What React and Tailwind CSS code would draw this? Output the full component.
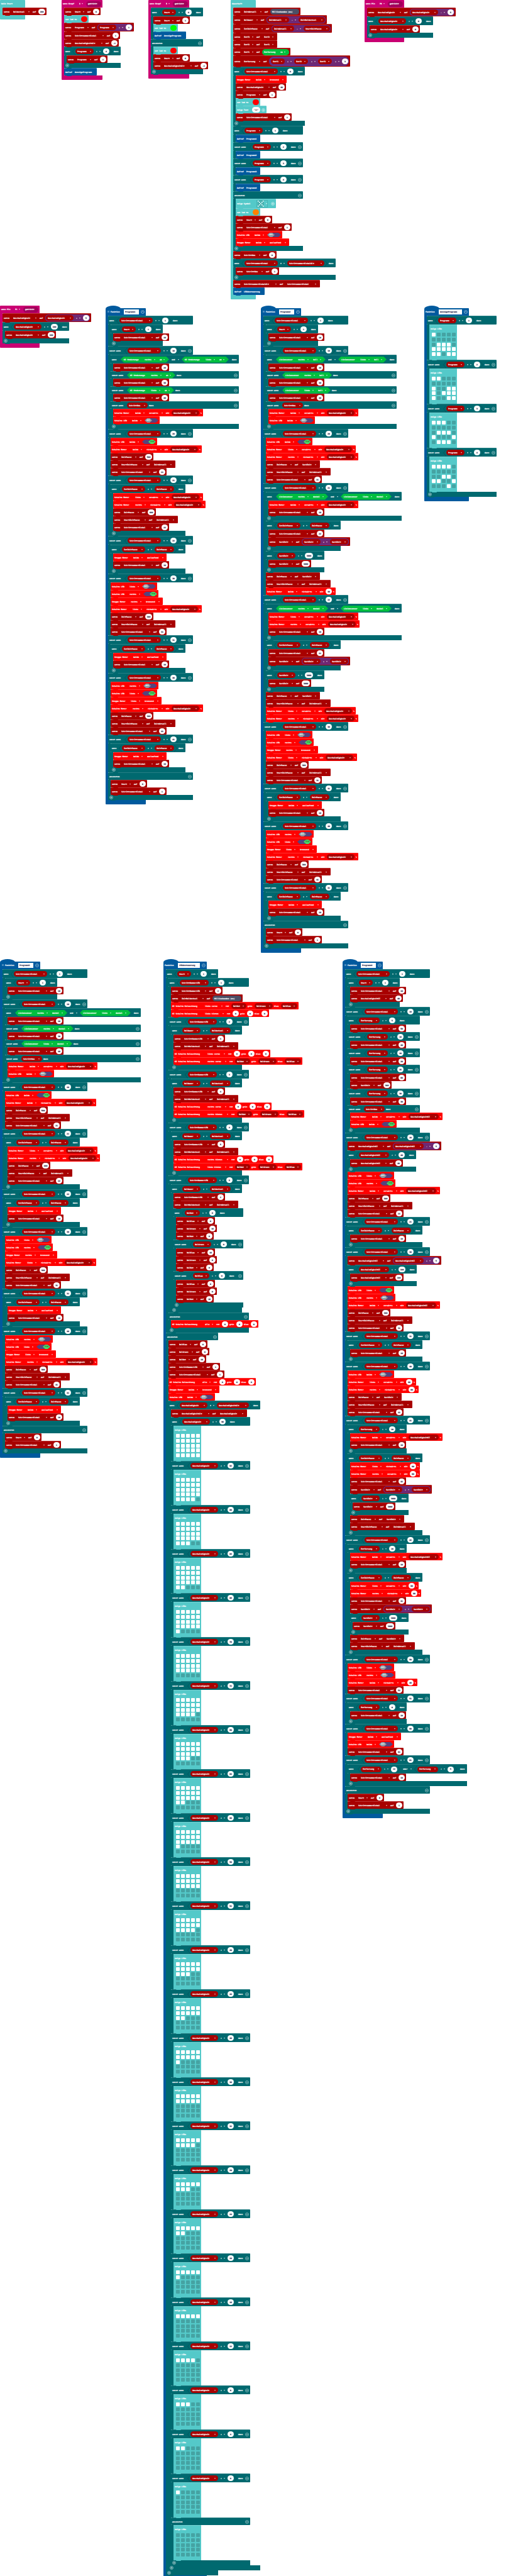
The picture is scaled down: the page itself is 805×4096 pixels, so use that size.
import React from "react";

const advance = (t) => Math.round(String(t).length * 2.2);

const Txt = ({ children }) => (
  <span className="block shrink-0" style={{ width: advance(children) }}>{children}</span>
);

const Arrow = () => (
  <svg viewBox="0 0 4 4" className="h-[2px] w-[2px] shrink-0" aria-hidden="true">
    <path d="M0 0.5h4L2 3.5z" fill="currentColor" />
  </svg>
);

function Drop({ value, className = "" }) {
  return (
    <span className={"flex shrink-0 items-center gap-[2px] pl-[2px] pr-[3px] " + className}>
      <select aria-label={value} className="h-[6px] appearance-none overflow-visible border-0 bg-transparent p-0 leading-[6px] outline-none [text-shadow:inherit]" style={{ width: advance(value) }}>
        <option>{value}</option>
      </select>
      <Arrow />
    </span>
  );
}

function Op({ value }) {
  return (
    <span className="flex shrink-0 items-center gap-[3px] px-[2px]">
      <select aria-label={"Operator " + value} className="h-[6px] appearance-none border-0 bg-transparent p-0 leading-[6px] outline-none [text-shadow:inherit]" style={{ width: advance(value) }}>
        <option>{value}</option>
      </select>
      <Arrow />
    </span>
  );
}

const Var = ({ name }) => (
  <span className="flex h-[9px] shrink-0 items-center rounded-full bg-[#a80000] pl-px pr-px">
    <Drop value={name} />
  </span>
);

function Num({ value }) {
  return (
    <input
      aria-label="Wert"
      defaultValue={value}
      className="h-[9px] shrink-0 rounded-full border-0 bg-white p-0 text-center text-[#2a2a4c] outline-none [text-shadow:0_0_1px_#2a2a4c]"
      style={{ width: Math.max(10, String(value).length * 2 + 5) }}
    />
  );
}

const Val = ({ v }) => {
  if (React.isValidElement(v)) return v;
  return /^-?\d+$/.test(String(v)) ? <Num value={v} /> : <Var name={v} />;
};

const Calc = ({ a, op, b }) => (
  <span className="flex shrink-0 items-center gap-[2px] rounded-full bg-[#6f2872] p-px shadow-[inset_0_0_0_1px_#64308f]">
    <Val v={a} />
    <Op value={op} />
    <Val v={b} />
  </span>
);

const Chevron = ({ flip }) => (
  <svg viewBox="0 0 5 12" className={"h-3 w-[5px] shrink-0 " + (flip ? "-scale-x-100" : "")} aria-hidden="true">
    <path d="M5 0.5L0.5 6L5 11.5" fill="none" stroke="#005258" strokeWidth="0.7" />
  </svg>
);

const Cmp = ({ a, op, b }) => (
  <span className="flex shrink-0 items-center">
    <Chevron />
    <span className="flex items-center gap-[2px]">
      <Val v={a} />
      <Op value={op} />
      <Val v={b} />
    </span>
    <Chevron flip />
  </span>
);

const Both = ({ a, op, b }) => (
  <span className="flex shrink-0 items-center gap-[2px] px-[3px]">
    {a}
    <Op value={op} />
    {b}
  </span>
);

const Sensor = ({ label, side, state }) => (
  <span className="flex h-[10px] shrink-0 items-center gap-[2px] bg-[#00bf3f] pl-[5px] pr-[4px] [clip-path:polygon(5px_0,calc(100%_-_5px)_0,100%_50%,calc(100%_-_5px)_100%,5px_100%,0_50%)]">
    <Txt>{label}</Txt>
    <Drop value={side} />
    <Drop value={state} />
  </span>
);

const Tab = ({ className }) => (
  <span className={"absolute -bottom-px left-[4px] z-10 h-px w-[8px] rounded-b-sm " + className} aria-hidden="true" />
);

const tones = {
  set: "bg-[#a80000]",
  act: "bg-[#ff0000]",
  basic: "bg-[#54c9c9]",
  call: "bg-[#005a9e]",
};

const Row = ({ tone, tall, children }) => (
  <div className={"relative flex w-max items-center gap-[2px] rounded-[1px] border-t border-white/20 px-[2px] " + (tall || "h-3") + " " + tones[tone]}>
    {children}
    <Tab className={tones[tone]} />
  </div>
);

const Sign = ({ kind }) => (
  <button type="button" aria-label={kind === "+" ? "Erweitern" : kind === "-" ? "Entfernen" : "Einklappen"} className="block h-[6px] w-[6px] shrink-0">
    <svg viewBox="0 0 12 12" className="h-[6px] w-[6px]" fill="none" stroke="#ffffff" strokeOpacity="0.75">
      <circle cx="6" cy="6" r="5" strokeWidth="1.2" />
      {kind === "^" ? <path d="M3.5 7L6 4.5L8.5 7" strokeWidth="1.6" /> : <path d={kind === "+" ? "M3 6h6M6 3v6" : "M3 6h6"} strokeWidth="1.8" />}
    </svg>
  </button>
);

/* statements */
const S = (name, v, tall) => (
  <Row tone="set" tall={tall || (React.isValidElement(v) && v.type === Calc ? "h-[14px]" : undefined)}>
    <Txt>setze</Txt>
    <Drop value={name} />
    <Txt>auf</Txt>
    <Val v={v} />
  </Row>
);
const Call = (name) => (
  <Row tone="call">
    <Txt>Aufruf</Txt>
    <Txt>{name}</Txt>
  </Row>
);
const Motor = (side, dir, v) => (
  <Row tone="act">
    <Txt>Schalte Motor</Txt>
    <Drop value={side} />
    <Drop value={dir} />
    <Txt>mit</Txt>
    <Val v={v} />
    <Txt>%</Txt>
  </Row>
);
const Stop = (side, how) => (
  <Row tone="act">
    <Txt>Stoppe Motor</Txt>
    <Drop value={side} />
    <Drop value={how} />
  </Row>
);
const hexShape = "[clip-path:polygon(4px_0,calc(100%_-_4px)_0,100%_50%,calc(100%_-_4px)_100%,4px_100%,0_50%)]";
const Led = (side, on) => (
  <Row tone="act">
    <Txt>Schalte LED</Txt>
    <Drop value={side} />
    <button type="button" role="switch" aria-checked={on} className={"flex h-[7px] w-[22px] shrink-0 items-center bg-[#55437d] " + hexShape + (on ? " justify-end" : "")}>
      <span className={"block h-[7px] w-3 text-center leading-[7px] " + hexShape + (on ? " bg-[#4cd964] text-[#2b5a34]" : " bg-[#8f9ba3]")}>{on ? "EIN" : "AUS"}</span>
    </button>
  </Row>
);
const Light = (side, r, g, b) => (
  <Row tone="act">
    <Txt>KI Schalte Beleuchtung</Txt>
    <Drop value={side} />
    <Txt>rot</Txt>
    <Val v={r} />
    <Txt>grün</Txt>
    <Val v={g} />
    <Txt>blau</Txt>
    <Val v={b} />
  </Row>
);
const dots = { red: "bg-[#ff0000]", green: "bg-[#00ff00]", orange: "bg-[#ff8000]" };
const Rgb = (c) => (
  <Row tone="basic">
    <Txt>set led to</Txt>
    <button type="button" aria-label={c} className={"ml-px h-[9px] w-[10px] shrink-0 rounded-full " + dots[c]} />
  </Row>
);

const LedGrid = ({ on }) => (
  <div className="relative h-[56px] w-[44px] border-t border-white/20 bg-[#54c9c9] pl-[4px] pt-[3px]">
    <div className="-ml-[2px] h-[9px] leading-[6px]">zeige LEDs</div>
    <div className="grid h-[37px] w-[38px] grid-cols-5 content-between gap-x-[2px]">
      {on.split("").map((c, i) => (
        <span key={i} className={"h-[6px] rounded-[1px] " + (c === "#" ? "bg-white" : "bg-[#45a3a3]")} />
      ))}
    </div>
    <Tab className="bg-[#54c9c9]" />
  </div>
);

/* branches: [condition, statements, height]; a null condition is the final else */
function If({ branches }) {
  return (
    <div className="relative flex w-max flex-col">
      {branches.map(([cond, body, h], i) => (
        <React.Fragment key={i}>
          <div className={"flex items-center gap-[2px] rounded-[1px] border-t border-white/15 bg-[#00696f] px-[2px] " + (h || (cond ? "h-[14px]" : "h-3"))}>
            <Txt>{cond ? (i ? "sonst wenn" : "wenn") : "ansonsten"}</Txt>
            {cond}
            {cond && <Txt>dann</Txt>}
            {i > 0 && <span className="ml-auto flex"><Sign kind="-" /></span>}
          </div>
          <Body className="border-[#00696f]" items={body} />
        </React.Fragment>
      ))}
      <div className="flex h-2 items-center bg-[#00696f] px-[2px]">
        <Sign kind="+" />
      </div>
      <Tab className="bg-[#00696f]" />
    </div>
  );
}

const Body = ({ items, className }) => (
  <div className={"w-0 border-l-4 " + className}>
    {items.map((el, i) => (
      <React.Fragment key={i}>{el}</React.Fragment>
    ))}
  </div>
);

const hats = {
  basic: ["bg-[#54c9c9]", "border-[#54c9c9]"],
  input: ["bg-[#c90072]", "border-[#c90072]"],
  fn: ["bg-[#005a9e]", "border-[#005a9e]"],
};

const Hat = ({ tone, head, items }) => (
  <section className="flex w-max min-w-[40px] flex-col">
    <div className={"flex h-3 items-center gap-[2px] rounded-t-[1px] px-[2px] " + hats[tone][0]}>{head}</div>
    <Body className={hats[tone][1]} items={items} />
    <div className={"h-[7px] rounded-b-[1px] " + hats[tone][0]} />
  </section>
);

const Pressed = ({ children }) => (
  <span className="flex h-[9px] items-center rounded-full bg-[#a1005b] px-[3px]">
    <Txt>{children}</Txt>
  </span>
);

const Fn = ({ name, icon, items }) => (
  <div className="w-max">
    <svg viewBox="0 0 24 4" className="block h-1 w-6" aria-hidden="true">
      <path d="M0 4C3 1 7 0 12 0S21 1 24 4z" fill="#005a9e" />
    </svg>
    <Hat
      tone="fn"
      items={items}
      head={
        <>
          {icon && (
            <svg viewBox="0 0 6 6" className="mb-[2px] ml-px h-[3px] w-[3px]" aria-hidden="true">
              <path d="M0.5 0.5h5v5h-5zM1.5 3h3" fill="none" stroke="#9fc3e0" />
            </svg>
          )}
          <Txt>Funktion</Txt>
          <input aria-label="Funktionsname" defaultValue={name} className="ml-px h-2 border-0 bg-white px-[2px] text-[#333355] outline-none [text-shadow:0_0_1px_#333355]" style={{ width: advance(name) + 4 }} />
          <span className="ml-px flex"><Sign kind="^" /></span>
        </>
      }
    />
  </div>
);

const G = "Geschwindigkeit";
const GA = "GeschwindigkeitAlt";
const GK = "GeschwindigkeitKI";
const N = "SchrittnummerGlobal";
const L = "SchrittNummerLED";

const eq = (a, b) => <Cmp a={a} op="=" b={b} />;
const step = (n) => eq(N, n);
const paused = <Cmp a="IstZeitPause" op="≥" b="ZeitPause" />;
const begin = (extra = []) => [step(1), [<If branches={[[eq("Start", 1), [S(N, 10), ...extra]]]} />]];
const finish = [null, [S("Start", 0), S(N, 1)]];
const mark = S("StartZeitPause", "ZeitAktuell");
const roll = (n) => [step(n), [<If branches={[[paused, [Stop("beide", "auslaufend"), S(N, 10)]]]} />]];
const dodge = (n, off, on) => [
  [step(n), [Led(off, false), Led(on, true), Stop(on, "bremsend"), Motor(off, "rückwärts", G), S("ZeitPause", 300), mark, S(N, n + 1)]],
  roll(n + 1),
];
const sense = (label, state) => {
  const r = <Sensor label={label} side="rechts" state={state} />;
  const l = <Sensor label={label} side="links" state={state} />;
  return [
    step(10),
    [
      <If
        branches={[
          [<Both a={r} op="und" b={l} />, [S(N, 20)]],
          [r, [S(N, 30)], "h-3"],
          [l, [S(N, 40)], "h-3"],
          [<Var name="SchrittNeu" />, [Motor("beide", "vorwärts", G), Led("beide", false)], "h-3"],
        ]}
      />,
    ],
  ];
};
const simple = (label, state) => [
  <If
    branches={[
      begin(),
      sense(label, state),
      [step(20), [Led("beide", true), Motor("beide", "rückwärts", G), S("ZeitPause", 500), mark, S(N, 21)]],
      [step(21), [<If branches={[[paused, [Motor("links", "vorwärts", G), Motor("rechts", "rückwärts", G), S("ZeitPause", 400), mark, S(N, 22)]]]} />]],
      roll(22),
      ...dodge(30, "links", "rechts"),
      ...dodge(40, "rechts", "links"),
      finish,
    ]}
  />,
];

const dark = (
  <Both
    a={<Sensor label="Liniensensor" side="rechts" state="dunkel" />}
    op="und"
    b={<Sensor label="Liniensensor" side="links" state="dunkel" />}
  />
);
const double = S("SuchZeit", <Calc a="SuchZeit" op="+" b="SuchZeit" />);
const limit = <If branches={[[<Cmp a="SuchZeit" op=">" b={3000} />, [S("SuchZeit", 3000)]]]} />;
const search = (n, onDark, next, tail) => [
  step(n),
  [
    <If branches={[[dark, [...onDark, S(N, 10)]]]} />,
    <If branches={[[paused, [S(N, next), double]]]} />,
    limit,
    S("ZeitPause", "SuchZeit"),
    mark,
    ...tail,
  ],
];
const program2 = [
  <If
    branches={[
      begin(),
      sense("Liniensensor", "hell"),
      [step(20), [Led("beide", true), Motor("links", "vorwärts", G), Motor("rechts", "rückwärts", G), S("ZeitPause", "SuchZeit"), mark, S(N, 21)]],
      search(21, [Motor("beide", "vorwärts", G)], 22, [Motor("beide", "rückwärts", 40)]),
      search(22, [Motor("links", "vorwärts", G), Motor("rechts", "vorwärts", G)], 21, [Motor("links", "vorwärts", G), Motor("rechts", "rückwärts", G)]),
      ...dodge(30, "links", "rechts"),
      ...dodge(40, "rechts", "links"),
      finish,
    ]}
  />,
];

const far = (op, n) => <Cmp a="Entfernung" op={op} b={n} />;
const back = (n) => [step(n), [<If branches={[[paused, [S(N, 10)]]]} />]];
const turn = (n, a, b, next) => [
  step(n),
  [
    <If branches={[[far(">", 20), [Motor("beide", "vorwärts", GK), S(N, 10)]]]} />,
    <If branches={[[paused, [Motor("links", a, 60), Motor("rechts", b, 60), S(N, next), double, limit, S("ZeitPause", "SuchZeit"), mark]]]} />,
  ],
];
const change = (n, op, cmp, edge, l, r) => [
  step(n),
  [
    S(GK, <Calc a={GK} op={op} b={5} />),
    <If branches={[[<Cmp a={GK} op={cmp} b={edge} />, [S(GK, edge)]]]} />,
    Led("links", l),
    Led("rechts", r),
    Motor("beide", "vorwärts", GK),
    S("ZeitPause", 300),
    mark,
    S(N, n + 1),
  ],
];
const program4 = [
  <If
    branches={[
      begin([S(GK, 40)]),
      [
        step(10),
        [
          <If
            branches={[
              [far("<", 5), [S(N, 50)]],
              [far("<", 10), [S(N, 40)]],
              [far("<", 20), [S(N, 20)]],
              [far(">", 35), [S(N, 60), S("SuchZeit", 300)]],
              [far(">", 30), [S(N, 30)]],
              [<Var name="SchrittNeu" />, [Motor("beide", "vorwärts", GK), Led("beide", true)], "h-3"],
            ]}
          />,
        ],
      ],
      change(20, "-", "<", 40, false, true),
      back(21),
      change(30, "+", ">", 100, true, false),
      back(31),
      [step(40), [Led("beide", false), Motor("links", "vorwärts", 60), Motor("rechts", "rückwärts", 60), S("ZeitPause", "SuchZeit"), mark, S(N, 41)]],
      turn(41, "rückwärts", "vorwärts", 42),
      turn(42, "vorwärts", "rückwärts", 41),
      [step(50), [Led("links", false), Led("rechts", false), Motor("beide", "rückwärts", 40), S(N, 51)]],
      [step(51), [<If branches={[[far(">", 8), [S(N, 10)]]]} />]],
      [step(60), [Stop("beide", "auslaufend"), Led("beide", false), S(N, 61)]],
      [step(61), [<If branches={[[<Both a={far(">", 12)} op="oder" b={far("<", 5)} />, [S(N, 10)], "h-[15px]"]]} />]],
      finish,
    ]}
  />,
];

const mix = (b, g, r) => [S("BelBlau", b), S("BelGruen", g), S("BelRot", r)];
const glow = ["BelRot", "BelGruen", "BelBlau"];
const lamp = (n, next, off, on) => [
  eq(L, n),
  [<If branches={[[<Cmp a="BelDauer" op="≥" b="BelWechsel" />, [S(L, next), S("ZeitBelWechsel", "ZeitAktuell"), Light(off, 0, 0, 0), Light(on, ...glow)]]]} />],
];
const Millis = (
  <span className="flex h-[9px] items-center rounded-full bg-[#4b4f66] px-[3px]">
    <Txt>Millisekunden (ms)</Txt>
  </span>
);
const speeds = Array.from({ length: 25 }, (_, i) => [
  <Cmp a={G} op="≥" b={96 - 4 * i} />,
  [<LedGrid on={"#".repeat(25 - i) + ".".repeat(i)} />],
]);
const lights = [
  <If
    branches={[
      [
        eq("Start", 1),
        [
          <If
            branches={[
              [eq(L, 1), [S(L, 2), S("ZeitBelWechsel", Millis), Light("links vorne", ...glow), Light("links hinten", 0, 0, 0)]],
              lamp(2, 3, "links vorne", "rechts vorne"),
              lamp(3, 4, "rechts vorne", "rechts hinten"),
              lamp(4, 5, "rechts hinten", "links hinten"),
              [
                eq(L, 5),
                [
                  <If
                    branches={[
                      [
                        <Cmp a="BelDauer" op="≥" b="BelWechsel" />,
                        [
                          S(L, 2),
                          S("ZeitBelWechsel", "ZeitAktuell"),
                          <If
                            branches={[
                              [<Cmp a="BelRot" op=">" b={0} />, mix(0, 16, 0)],
                              [<Cmp a="BelGruen" op=">" b={0} />, mix(16, 0, 0)],
                              [<Cmp a="BelBlau" op=">" b={0} />, mix(0, 0, 16)],
                            ]}
                          />,
                        ],
                      ],
                    ]}
                  />,
                ],
              ],
              [null, [Light("alle", 0, 0, 0)]],
            ]}
          />,
        ],
      ],
      [
        null,
        [
          ...mix(0, 0, 16),
          S(L, 1),
          S(N, 1),
          Light("alle", 0, 0, 0),
          Stop("beide", "bremsend"),
          Led("beide", false),
          <If branches={[[<Cmp a={G} op="≠" b={GA} />, [S(GA, G), <If branches={[...speeds, [null, [<LedGrid on={".".repeat(25)} />]]]} />]]]} />,
        ],
      ],
    ]}
  />,
];

const prog = (n) => <Cmp a="Programm" op="=" b={n} />;
const display = [
  <If
    branches={[
      [prog(1), [<LedGrid on={"#....." + "...." + "." + "###." + "#####" + "##.##"} />]],
      [prog(2), [<LedGrid on={"##..." + "....." + "#..##" + "#.###" + "#..##"} />]],
      [prog(3), [<LedGrid on={"###.." + "....." + ".###." + "#...#" + ".###."} />]],
      [prog(4), [<LedGrid on={"####." + "....." + "..##." + "##..#" + "...#."} />]],
    ]}
  />,
];

const Symbol = (
  <Row tone="basic" tall="h-[15px]">
    <Txt>zeige Symbol</Txt>
    <button type="button" aria-label="Symbol" className="ml-[3px] flex h-3 w-[18px] shrink-0 items-center gap-[3px] border border-[#47b3b3] pl-px">
      <svg viewBox="0 0 10 10" className="h-[10px] w-[10px]" aria-hidden="true">
        {"#...#.#.#...#...#.#.#...#".split("").map((c, i) => (
          <rect key={i} x={(i % 5) * 2} y={Math.floor(i / 5) * 2} width="1.5" height="1.5" fill={c === "#" ? "#fff" : "#3f9b9b"} />
        ))}
      </svg>
      <Arrow />
    </button>
    <span className="ml-[3px] flex"><Sign kind="+" /></span>
  </Row>
);
const ShowText = (
  <Row tone="basic">
    <Txt>zeige Text</Txt>
    <input aria-label="Text" defaultValue={'"GO"'} className="h-[9px] w-[13px] rounded-full border-0 bg-white p-0 text-center text-[#6d4a4a] outline-none" />
    <Sign kind="+" />
  </Row>
);
const Range = (
  <span className="flex h-[10px] items-center gap-[2px] rounded-full bg-[#00bf3f] px-[3px]">
    <Txt>Entfernung</Txt>
    <Drop value="cm" />
  </span>
);
const average = <Calc a={<Calc a={<Calc a="Entf1" op="+" b="Entf2" />} op="+" b="Entf3" />} op="÷" b={3} />;

const forever = [
  S("ZeitAktuell", Millis),
  S("BelDauer", <Calc a="ZeitAktuell" op="-" b="ZeitBelWechsel" />),
  S("IstZeitPause", <Calc a="ZeitAktuell" op="-" b="StartZeitPause" />),
  S("Entf3", "Entf2"),
  S("Entf2", "Entf1"),
  S("Entf1", Range),
  S("Entfernung", average, "h-[18px]"),
  <If branches={[[step(0), [Stop("beide", "bremsend"), S(G, 40), S("Programm", 1), Rgb("red"), ShowText, S(N, 1)]]]} />,
  <If
    branches={[
      [prog(1), [Call("Programm1")]],
      [prog(2), [Call("Programm2")]],
      [prog(3), [Call("Programm3")]],
      [prog(4), [Call("Programm4")]],
      [null, [Symbol, Rgb("orange"), S("Start", 0), S(N, 1), Led("beide", false), Stop("beide", "auslaufend")]],
    ]}
  />,
  S("SchrittNeu", 0),
  <If branches={[[<Cmp a={N} op="≠" b={N + "Alt"} />, [S("SchrittNeu", 1)]]]} />,
  S(N + "Alt", N),
  Call("LEDAnsteuerung"),
];

const Button = ({ id, items }) => (
  <Hat tone="input" head={<><Txt>wenn Knopf</Txt><Drop value={id} /><Pressed>gedrückt</Pressed></>} items={items} />
);
const Pin = ({ id, items }) => (
  <Hat tone="input" head={<><Txt>wenn Pin</Txt><Drop value={id} /><Pressed>gedrückt</Pressed></>} items={items} />
);

export default function App() {
  return (
    <main className="w-full overflow-hidden bg-white font-['DejaVu_Sans_Mono','Liberation_Mono',monospace] text-[3px] font-bold leading-[6px] whitespace-nowrap text-white [text-shadow:0_0_1px_#ffffff]">
      <div className="grid grid-cols-[98px_138px_131px_213px_1fr] items-start pb-[10px]">
        <Hat tone="basic" head={<Txt>beim Start</Txt>} items={[S("BelWechsel", 200)]} />
        <Button
          id="A"
          items={[
            S("Start", 0),
            Rgb("red"),
            S("Programm", <Calc a="Programm" op="+" b={1} />),
            S(N, 1),
            S(GA, -1),
            <If branches={[[<Cmp a="Programm" op=">" b={4} />, [S("Programm", 1)]]]} />,
            Call("AnzeigeProgramm"),
          ]}
        />
        <Button
          id="B"
          items={[
            <If
              branches={[
                [eq("Start", 0), [S("Start", 1), Rgb("green"), Call("AnzeigeProgramm")]],
                [null, [Rgb("red"), S("Start", 0), S(GA, -1)]],
              ]}
            />,
          ]}
        />
        <Hat tone="basic" head={<Txt>dauerhaft</Txt>} items={forever} />
        <Pin id="P0" items={[S(G, <Calc a={G} op="-" b={5} />), <If branches={[[<Cmp a={G} op="<" b={0} />, [S(G, 0)]]]} />]} />
      </div>
      <div className="grid grid-cols-[168px_247px_260px_1fr] items-start pb-[10px]">
        <Pin id="P1" items={[S(G, <Calc a={G} op="+" b={5} />), <If branches={[[<Cmp a={G} op=">" b={100} />, [S(G, 100)]]]} />]} />
        <Fn icon name="Programm1" items={simple("KI Stoßstange", "an")} />
        <Fn icon name="Programm2" items={program2} />
        <Fn name="AnzeigeProgramm" items={display} />
      </div>
      <div className="grid grid-cols-[260px_285px_1fr] items-start">
        <Fn icon name="Programm3" items={simple("Liniensensor", "dunkel")} />
        <Fn name="LEDAnsteuerung" items={lights} />
        <Fn icon name="Programm4" items={program4} />
      </div>
    </main>
  );
}
